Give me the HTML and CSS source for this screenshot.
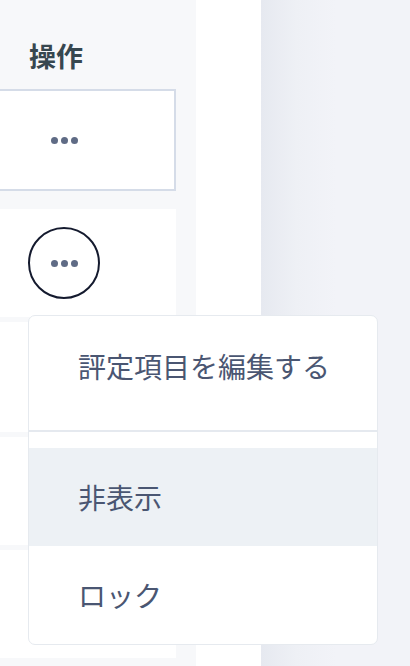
FILE: index.html
```html
<!DOCTYPE html>
<html lang="ja">
<head>
<meta charset="utf-8">
<link rel="stylesheet" href="styles.css">
</head>
<body>
<div class="page">
  <section class="table">
    <div class="head"><span class="head-label">操作</span></div>
    <div class="rows">
      <div class="row row-active">
        <div class="cell"><span class="dots"><i></i><i></i><i></i></span></div>
      </div>
      <div class="row row-second">
        <div class="cell"><button class="more-btn"><span class="dots"><i></i><i></i><i></i></span></button></div>
      </div>
      <div class="row row-tall"></div>
      <div class="row"></div>
      <div class="row"></div>
    </div>
  </section>
  <div class="panel"></div>
  <div class="side"></div>
  <ul class="menu">
    <li class="menu-item menu-item-first">評定項目を編集する</li>
    <li class="menu-divider"></li>
    <li class="menu-item menu-item-hover">非表示</li>
    <li class="menu-item">ロック</li>
  </ul>
</div>
</body>
</html>
```

FILE: styles.css
```css
* { box-sizing: border-box; }
html, body { margin: 0; padding: 0; }
body {
  width: 410px;
  height: 666px;
  overflow: hidden;
  font-family: "Noto Sans CJK JP", "Noto Sans", sans-serif;
  background: #ffffff;
}
.page {
  position: relative;
  display: flex;
  width: 410px;
  height: 666px;
}
.table {
  width: 196px;
  flex: none;
  background: #f7f8fa;
  padding-right: 20px;
}
.head {
  height: 89px;
  padding: 36px 0 0 29px;
}
.head-label {
  font-size: 27px;
  line-height: 40px;
  font-weight: 700;
  color: #37474f;
}
.rows {
  display: flex;
  flex-direction: column;
  gap: 5px;
}
.row {
  height: 108px;
  background: #ffffff;
  display: flex;
  align-items: center;
}
.row-active {
  height: 102px;
  border: 2px solid #d5dce8;
  border-left: none;
  margin-bottom: 13px;
}
.row-tall { height: 110px; }
.cell {
  padding-left: 28px;
}
.dots {
  width: 72px;
  display: flex;
  justify-content: center;
  gap: 3px;
}
.dots i {
  width: 7px;
  height: 7px;
  border-radius: 50%;
  background: #5f6b85;
}
.more-btn {
  width: 72px;
  height: 72px;
  border: 2px solid #141a2e;
  border-radius: 50%;
  background: #ffffff;
  padding: 0;
  display: flex;
  align-items: center;
  justify-content: center;
}
.more-btn .dots { width: auto; }
.panel {
  width: 65px;
  flex: none;
  background: #ffffff;
}
.side {
  flex: 1;
  background: linear-gradient(to right, #e6e9f0 0px, #eef0f5 35px, #f2f3f8 75px, #f2f3f8 100%);
}
.menu {
  position: absolute;
  left: 28px;
  top: 315px;
  width: 350px;
  height: 330px;
  margin: 0;
  padding: 0;
  list-style: none;
  background: #ffffff;
  border: 1.5px solid #e6eaef;
  border-radius: 7px;
  overflow: hidden;
}
.menu-item {
  height: 98px;
  display: flex;
  align-items: center;
  padding-left: 49px;
  font-size: 28px;
  color: #4a5672;
}
.menu-item-first {
  height: 99px;
  margin-bottom: 15px;
}
.menu-divider {
  height: 2px;
  background: #e5e9ef;
  margin-bottom: 16px;
}
.menu-item-hover {
  background: #edf1f5;
}
```
